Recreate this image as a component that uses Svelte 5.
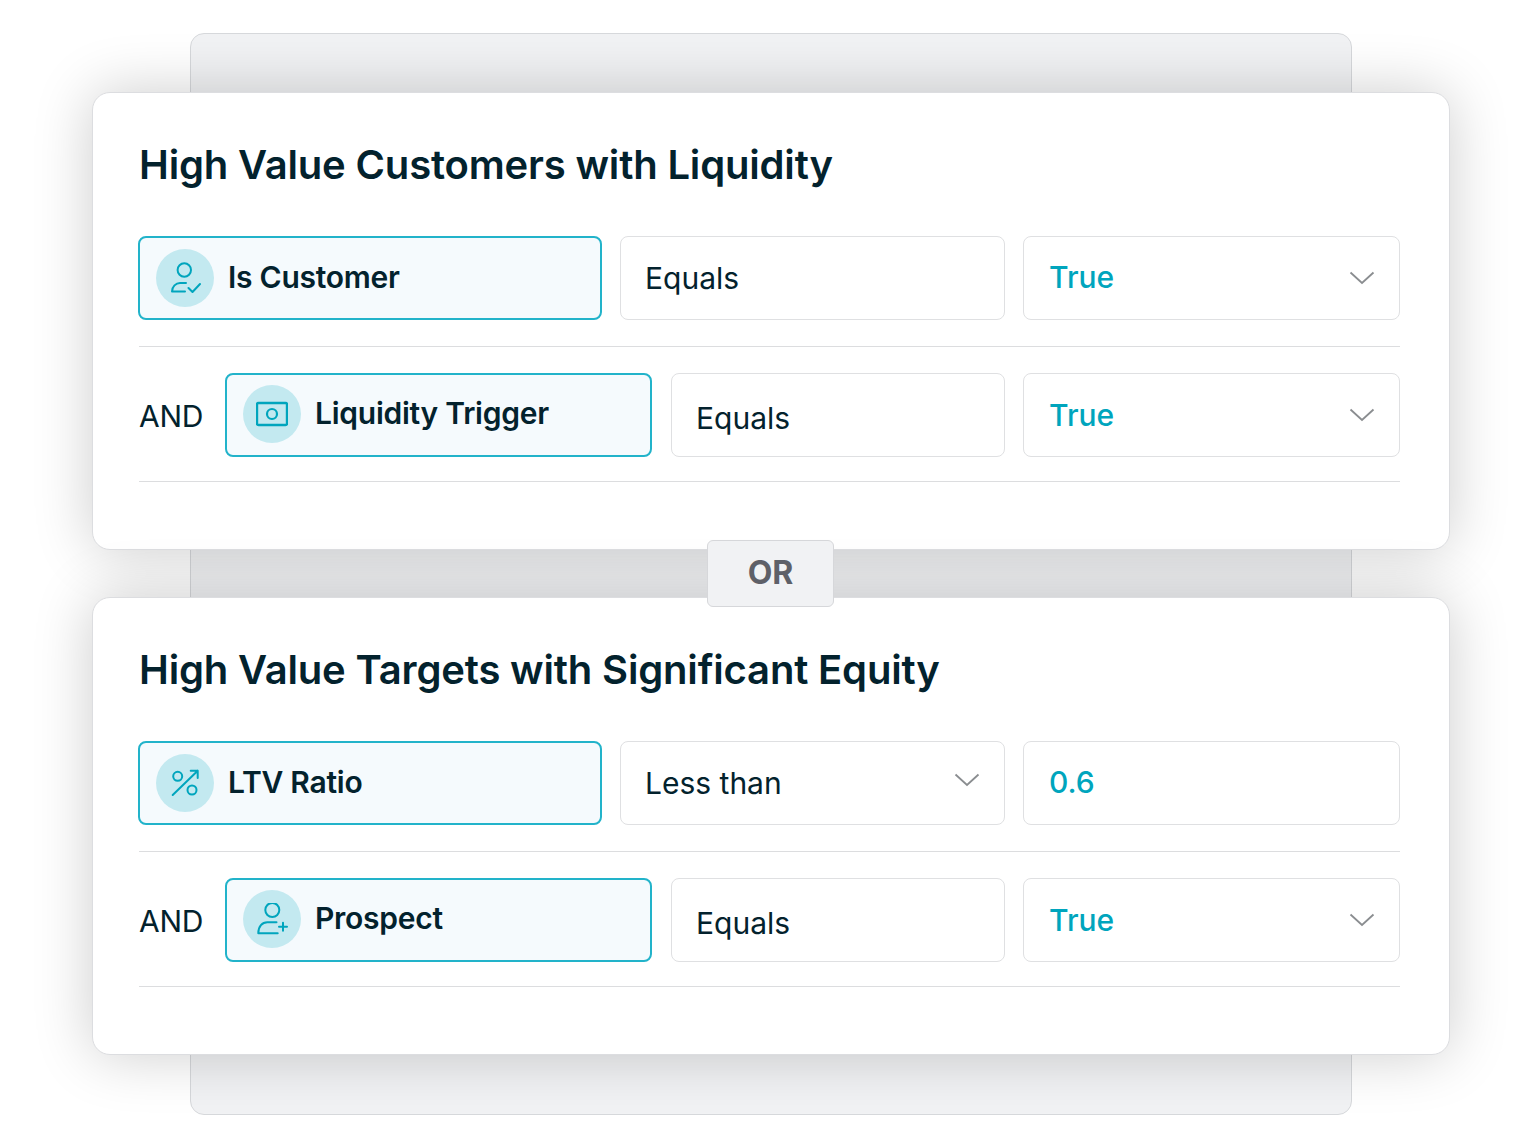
<script>
  let groups = [
    {
      title: 'High Value Customers with Liquidity',
      rows: [
        { icon: 'check', name: 'Is Customer', op: 'Equals', val: 'True', caret: 'val' },
        { icon: 'money', name: 'Liquidity Trigger', op: 'Equals', val: 'True', caret: 'val', and: true }
      ]
    },
    {
      title: 'High Value Targets with Significant Equity',
      rows: [
        { icon: 'pct', name: 'LTV Ratio', op: 'Less than', val: '0.6', caret: 'op' },
        { icon: 'plus', name: 'Prospect', op: 'Equals', val: 'True', caret: 'val', and: true }
      ]
    }
  ]
</script>

{#snippet chevron()}
  <svg class="chev" width="26" height="14" viewBox="0 0 26 14" fill="none" stroke="#8a8d90" stroke-width="1.8">
    <path d="M1.5 1.5 L13 12 L24.5 1.5" />
  </svg>
{/snippet}

<div class="stage">
  <div class="back"></div>
  {#each groups as g, gi}
    <section class="card">
      <h2>{g.title}</h2>
      {#each g.rows as r}
        <div class="row" class:second={r.and}>
          {#if r.and}<span class="and">AND</span>{/if}
          <div class="field">
            <span class="badge">
              <svg width="32" height="32" viewBox="0 0 32 32" fill="none" stroke="#00a5bd" stroke-width="2" stroke-linecap="round" stroke-linejoin="round">
                {#if r.icon == 'check'}
                  <circle cx="15.3" cy="8" r="6.7" />
                  <path d="M3 29.5 H16 M3 29.5 C3 24.5 7 21 11 21 H17" />
                  <path d="M19.5 26 L23.5 30 L31 22" />
                {:else if r.icon == 'money'}
                  <rect x="1" y="5" width="30" height="22" rx="1.5" stroke-width="2.4" />
                  <circle cx="16" cy="16" r="5" stroke-width="2.2" />
                {:else if r.icon == 'pct'}
                  <circle cx="8.7" cy="9.3" r="4.5" />
                  <circle cx="23" cy="23" r="4.5" />
                  <path d="M3.7 28 L28.7 3.7 M21.7 3.7 H28.7 V11" />
                {:else}
                  <circle cx="16.3" cy="7" r="7" />
                  <path d="M2.3 30.3 H21.7 M2.3 30.3 C2.3 23.3 6.3 19.3 11.3 19.3 H20.5" />
                  <path d="M27 19.7 V27.7 M23 23.7 H31" />
                {/if}
              </svg>
            </span>
            <span class="name">{r.name}</span>
          </div>
          <div class="box op">
            <span>{r.op}</span>
            {#if r.caret == 'op'}{@render chevron()}{/if}
          </div>
          <div class="box val">
            <span>{r.val}</span>
            {#if r.caret == 'val'}{@render chevron()}{/if}
          </div>
        </div>
        <hr />
      {/each}
    </section>
    {#if gi == 0}
      <div class="or">OR</div>
    {/if}
  {/each}
</div>

<style>
  :global(body) {
    margin: 0;
    background: #fff;
  }
  .stage {
    position: relative;
    box-sizing: border-box;
    width: 1540px;
    height: 1148px;
    padding: 92px 90px 0 92px;
    display: flex;
    flex-direction: column;
    gap: 47px;
    font-family: Inter, "Liberation Sans", sans-serif;
    color: #03222d;
    overflow: hidden;
  }
  .back {
    position: absolute;
    left: 190px;
    top: 33px;
    width: 1160px;
    height: 1080px;
    border: 1px solid #d6d8db;
    border-radius: 14px;
    background: #f1f2f4;
  }
  .card {
    position: relative;
    box-sizing: border-box;
    height: 458px;
    padding: 46px 49px 0 46px;
    background: #fff;
    border: 1px solid #dcdde0;
    border-radius: 18px;
    box-shadow: 0 0 60px rgba(0, 0, 0, 0.2);
  }
  h2 {
    margin: 0 0 45px;
    font-size: 40px;
    line-height: 52px;
    font-weight: 600;
    letter-spacing: -0.17px;
  }
  .row {
    display: grid;
    grid-template-columns: 464px 385px 377px;
    gap: 18px;
    height: 84px;
    margin-left: -1px;
  }
  .row.second {
    grid-template-columns: 427px 335px 377px;
    position: relative;
    padding-left: 86px;
    margin-left: 0;
  }
  .and {
    position: absolute;
    left: 0;
    top: 0;
    line-height: 86px;
    font-size: 30px;
    letter-spacing: -0.3px;
  }
  .field {
    box-sizing: border-box;
    display: flex;
    align-items: center;
    gap: 14px;
    padding-left: 16px;
    background: #f5fafd;
    border: 2px solid #22b3ca;
    border-radius: 8px;
  }
  .second .field {
    padding-bottom: 2px;
  }
  .badge {
    width: 58px;
    height: 58px;
    border-radius: 50%;
    background: #c3e9f0;
    display: flex;
    align-items: center;
    justify-content: center;
    flex: none;
  }
  .name {
    font-size: 30px;
    font-weight: 600;
    letter-spacing: -0.25px;
    margin-top: -2px;
  }
  .box {
    box-sizing: border-box;
    display: flex;
    align-items: center;
    justify-content: space-between;
    padding: 0 24px 0 24px;
    background: #fff;
    border: 1px solid #dfe0e2;
    border-radius: 8px;
    font-size: 30px;
  }
  .second .op {
    margin-left: 1px;
    padding-top: 5px;
  }
  .op .chev {
    margin-top: -6px;
  }
  .val {
    padding-left: 25px;
    color: #00a5bd;
    font-weight: 500;
  }
  .val span {
    margin-top: -2px;
  }
  .second .val span {
    margin-top: -1px;
  }
  hr {
    margin: 26px 0 26px;
    border: none;
    border-top: 1px solid #dcdddf;
  }
  .second + hr {
    margin-top: 24px;
  }
  .or {
    position: absolute;
    left: 707px;
    top: 540px;
    box-sizing: border-box;
    width: 127px;
    height: 67px;
    padding-bottom: 2px;
    display: flex;
    align-items: center;
    justify-content: center;
    background: #f1f2f4;
    border: 1px solid #d6d7da;
    border-radius: 6px;
    font-size: 32px;
    font-weight: 700;
    color: #5e6068;
    z-index: 2;
  }
</style>
